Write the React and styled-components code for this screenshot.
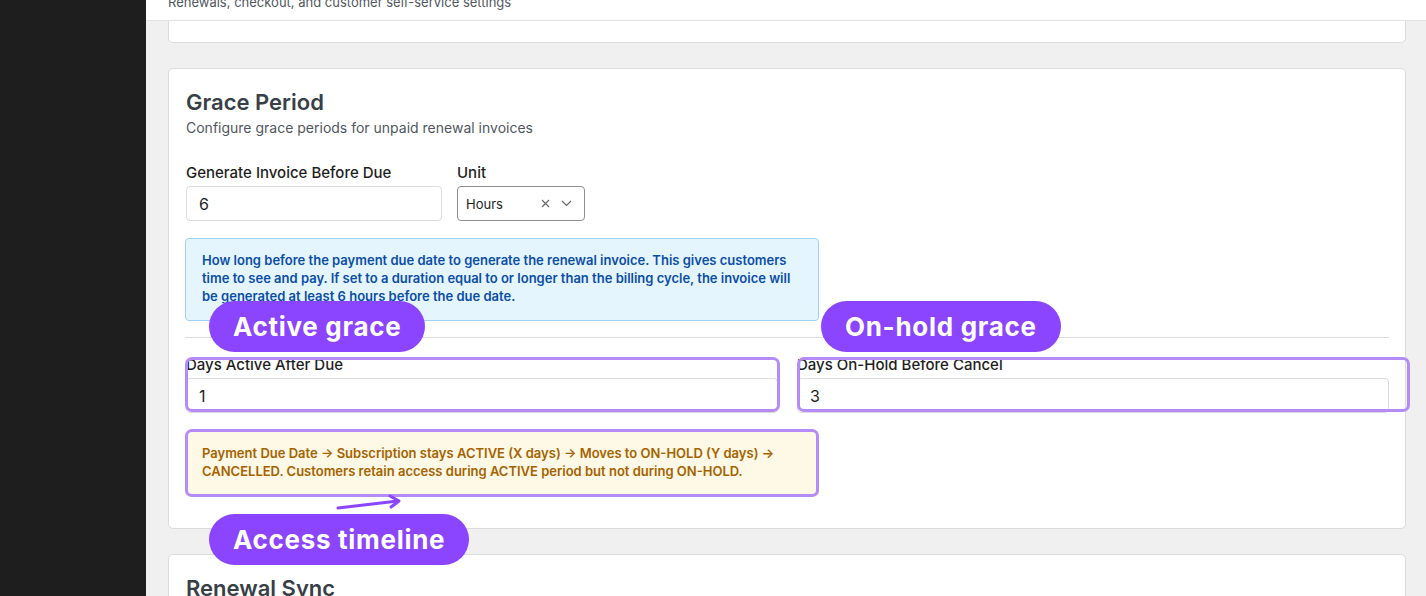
import styled, { createGlobalStyle } from "styled-components";

const GlobalStyle = createGlobalStyle`
  html, body {
    margin: 0;
    padding: 0;
    height: 100%;
    overflow: hidden;
  }
  body {
    font-family: Inter, "Liberation Sans", sans-serif;
    background: #f0f0f1;
  }
  * {
    box-sizing: border-box;
  }
`;

function App() {
  return (
    <>
      <GlobalStyle />
      <Shell>
        <Sidebar />
        <Main>
          <Header>
            <PageTitle>Subscriptions</PageTitle>
            <PageSub>Renewals, checkout, and customer self-service settings</PageSub>
          </Header>
          <ScrollArea>
            <Stack>
              <Card>
                <CardTitle>Checkout</CardTitle>
                <CardSub>Options shown to customers at checkout</CardSub>
                <FieldRow>
                  <Field>
                    <Label>Allow Switching</Label>
                    <TextInput defaultValue="Yes" />
                  </Field>
                </FieldRow>
              </Card>

              <Card $front>
                <CardTitle>Grace Period</CardTitle>
                <CardSub>Configure grace periods for unpaid renewal invoices</CardSub>
                <FieldRow>
                  <Field $width="256px">
                    <Label>Generate Invoice Before Due</Label>
                    <TextInput defaultValue="6" />
                  </Field>
                  <Field>
                    <Label>Unit</Label>
                    <SelectBox>
                      <SelectValue>Hours</SelectValue>
                      <SelectIcons>
                        <svg width="9" height="9" viewBox="0 0 9 9">
                          <path d="M1 1 L8 8 M8 1 L1 8" stroke="#6b6b6b" strokeWidth="1.2" />
                        </svg>
                        <svg width="11" height="7" viewBox="0 0 11 7">
                          <path d="M1 1 L5.5 5.5 L10 1" stroke="#6b6b6b" strokeWidth="1.2" fill="none" />
                        </svg>
                      </SelectIcons>
                    </SelectBox>
                  </Field>
                </FieldRow>
                <Notice $tone="info">
                  How long before the payment due date to generate the renewal invoice. This gives customers
                  time to see and pay. If set to a duration equal to or longer than the billing cycle, the invoice will
                  be generated at least 6 hours before the due date.
                </Notice>
                <Divider />
                <TwoCols>
                  <Field>
                    <Label>Days Active After Due</Label>
                    <TextInput defaultValue="1" />
                  </Field>
                  <Field>
                    <Label>Days On-Hold Before Cancel</Label>
                    <TextInput defaultValue="3" />
                  </Field>
                </TwoCols>
                <Notice $tone="warning" $gap="18px">
                  Payment Due Date → Subscription stays ACTIVE (X days) → Moves to ON-HOLD (Y days) →
                  CANCELLED. Customers retain access during ACTIVE period but not during ON-HOLD.
                </Notice>

                <Outline $left={16} $top={288} $w={595} $h={55} />
                <Outline $left={628} $top={288} $w={613} $h={55} />
                <Outline $left={16} $top={360} $w={634} $h={68} />
                <Badge $left={40} $top={232}>Active grace</Badge>
                <Badge $left={652} $top={232}>On-hold grace</Badge>
                <Badge $left={40} $top={445}>Access timeline</Badge>
                <Arrow width="76" height="20" viewBox="0 0 76 20">
                  <path d="M4 15 L64 8" stroke="#8b45ff" strokeWidth="3" strokeLinecap="round" />
                  <path d="M56 3 L65 8 L57 14" stroke="#8b45ff" strokeWidth="3" fill="none" strokeLinecap="round" strokeLinejoin="round" />
                </Arrow>
              </Card>

              <Card>
                <CardTitle>Renewal Sync</CardTitle>
                <CardSub>Keep renewal dates aligned with the billing cycle</CardSub>
              </Card>
            </Stack>
          </ScrollArea>
        </Main>
      </Shell>
    </>
  );
}

export default App;

const Shell = styled.div`
  display: flex;
  height: 596px;
  overflow: hidden;
`;

const Sidebar = styled.aside`
  width: 146px;
  flex-shrink: 0;
  background: #1e1e1e;
`;

const Main = styled.main`
  flex: 1;
  display: flex;
  flex-direction: column;
  min-width: 0;
  background: #f0f0f1;
`;

const Header = styled.header`
  margin-top: -55px;
  padding: 16px 22px 9px;
  background: #ffffff;
  border-bottom: 1px solid #e2e2e4;
  position: relative;
  z-index: 3;
`;

const PageTitle = styled.h1`
  margin: 0 0 2px;
  font-size: 23px;
  line-height: 30px;
  font-weight: 600;
  color: #1d2327;
`;

const PageSub = styled.p`
  margin: 0;
  font-size: 13px;
  line-height: 18px;
  color: #50575e;
`;

const ScrollArea = styled.div`
  flex: 1;
  overflow: hidden;
  padding: 0 20px 0 22px;
`;

const Stack = styled.div`
  display: flex;
  flex-direction: column;
  gap: 25px;
  margin-top: -164px;
`;

const Card = styled.section`
  position: relative;
  z-index: ${(p) => (p.$front ? 2 : 1)};
  background: #ffffff;
  border: 1px solid #dcdcde;
  border-radius: 5px;
  padding: 19px 16px 32px 17px;
`;

const CardTitle = styled.h2`
  margin: 0;
  font-size: 22px;
  line-height: 28px;
  font-weight: 600;
  color: #383f46;
`;

const CardSub = styled.p`
  margin: 2px 0 0;
  font-size: 14px;
  line-height: 20px;
  color: #50575e;
`;

const FieldRow = styled.div`
  display: flex;
  gap: 15px;
  margin-top: 25px;
`;

const TwoCols = styled.div`
  display: grid;
  grid-template-columns: 1fr 1fr;
  gap: 19px;
`;

const Field = styled.div`
  display: flex;
  flex-direction: column;
  width: ${(p) => p.$width || "auto"};
  min-width: 0;
`;

const Label = styled.label`
  font-size: 15px;
  line-height: 20px;
  font-weight: 500;
  color: #1e1e1e;
  margin-bottom: 3px;
  white-space: nowrap;
`;

const TextInput = styled.input`
  height: 35px;
  width: 100%;
  border: 1px solid #dcdcde;
  border-radius: 4px;
  padding: 0 12px;
  font-family: inherit;
  font-size: 16px;
  color: #1e1e1e;
  background: #ffffff;
  outline: none;
`;

const SelectBox = styled.div`
  display: flex;
  align-items: center;
  justify-content: space-between;
  width: 128px;
  height: 35px;
  border: 1px solid #8c8f94;
  border-radius: 4px;
  padding: 0 12px 0 8px;
  background: #ffffff;
`;

const SelectValue = styled.span`
  font-size: 13px;
  color: #1e1e1e;
  padding-top: 1px;
`;

const SelectIcons = styled.span`
  display: flex;
  align-items: center;
  gap: 11px;
`;

const Notice = styled.div`
  width: 634px;
  margin: ${(p) => p.$gap || "17px"} 0 0 -1px;
  padding: 12px 16px 15px;
  border-radius: 4px;
  font-size: 13px;
  line-height: 18px;
  font-weight: 600;
  border: 1px solid ${(p) => (p.$tone === "warning" ? "#f3d58f" : "#9cd3f6")};
  background: ${(p) => (p.$tone === "warning" ? "#fef8e6" : "#e5f5fe")};
  color: ${(p) => (p.$tone === "warning" ? "#a56300" : "#0b4ea6")};
`;

const Divider = styled.hr`
  border: 0;
  border-top: 1px solid #dcdcde;
  margin: 16px 0 17px -1px;
`;

const Outline = styled.div`
  position: absolute;
  left: ${(p) => p.$left}px;
  top: ${(p) => p.$top}px;
  width: ${(p) => p.$w}px;
  height: ${(p) => p.$h}px;
  border: 3px solid #b58bf8;
  border-radius: 7px;
  pointer-events: none;
`;

const Badge = styled.div`
  position: absolute;
  left: ${(p) => p.$left}px;
  top: ${(p) => p.$top}px;
  height: 51px;
  padding: 0 24px;
  display: flex;
  align-items: center;
  border-radius: 26px;
  background: #8b45ff;
  color: #ffffff;
  font-size: 26px;
  font-weight: 700;
  letter-spacing: 0.7px;
  white-space: nowrap;
`;

const Arrow = styled.svg`
  position: absolute;
  left: 165px;
  top: 424px;
`;
